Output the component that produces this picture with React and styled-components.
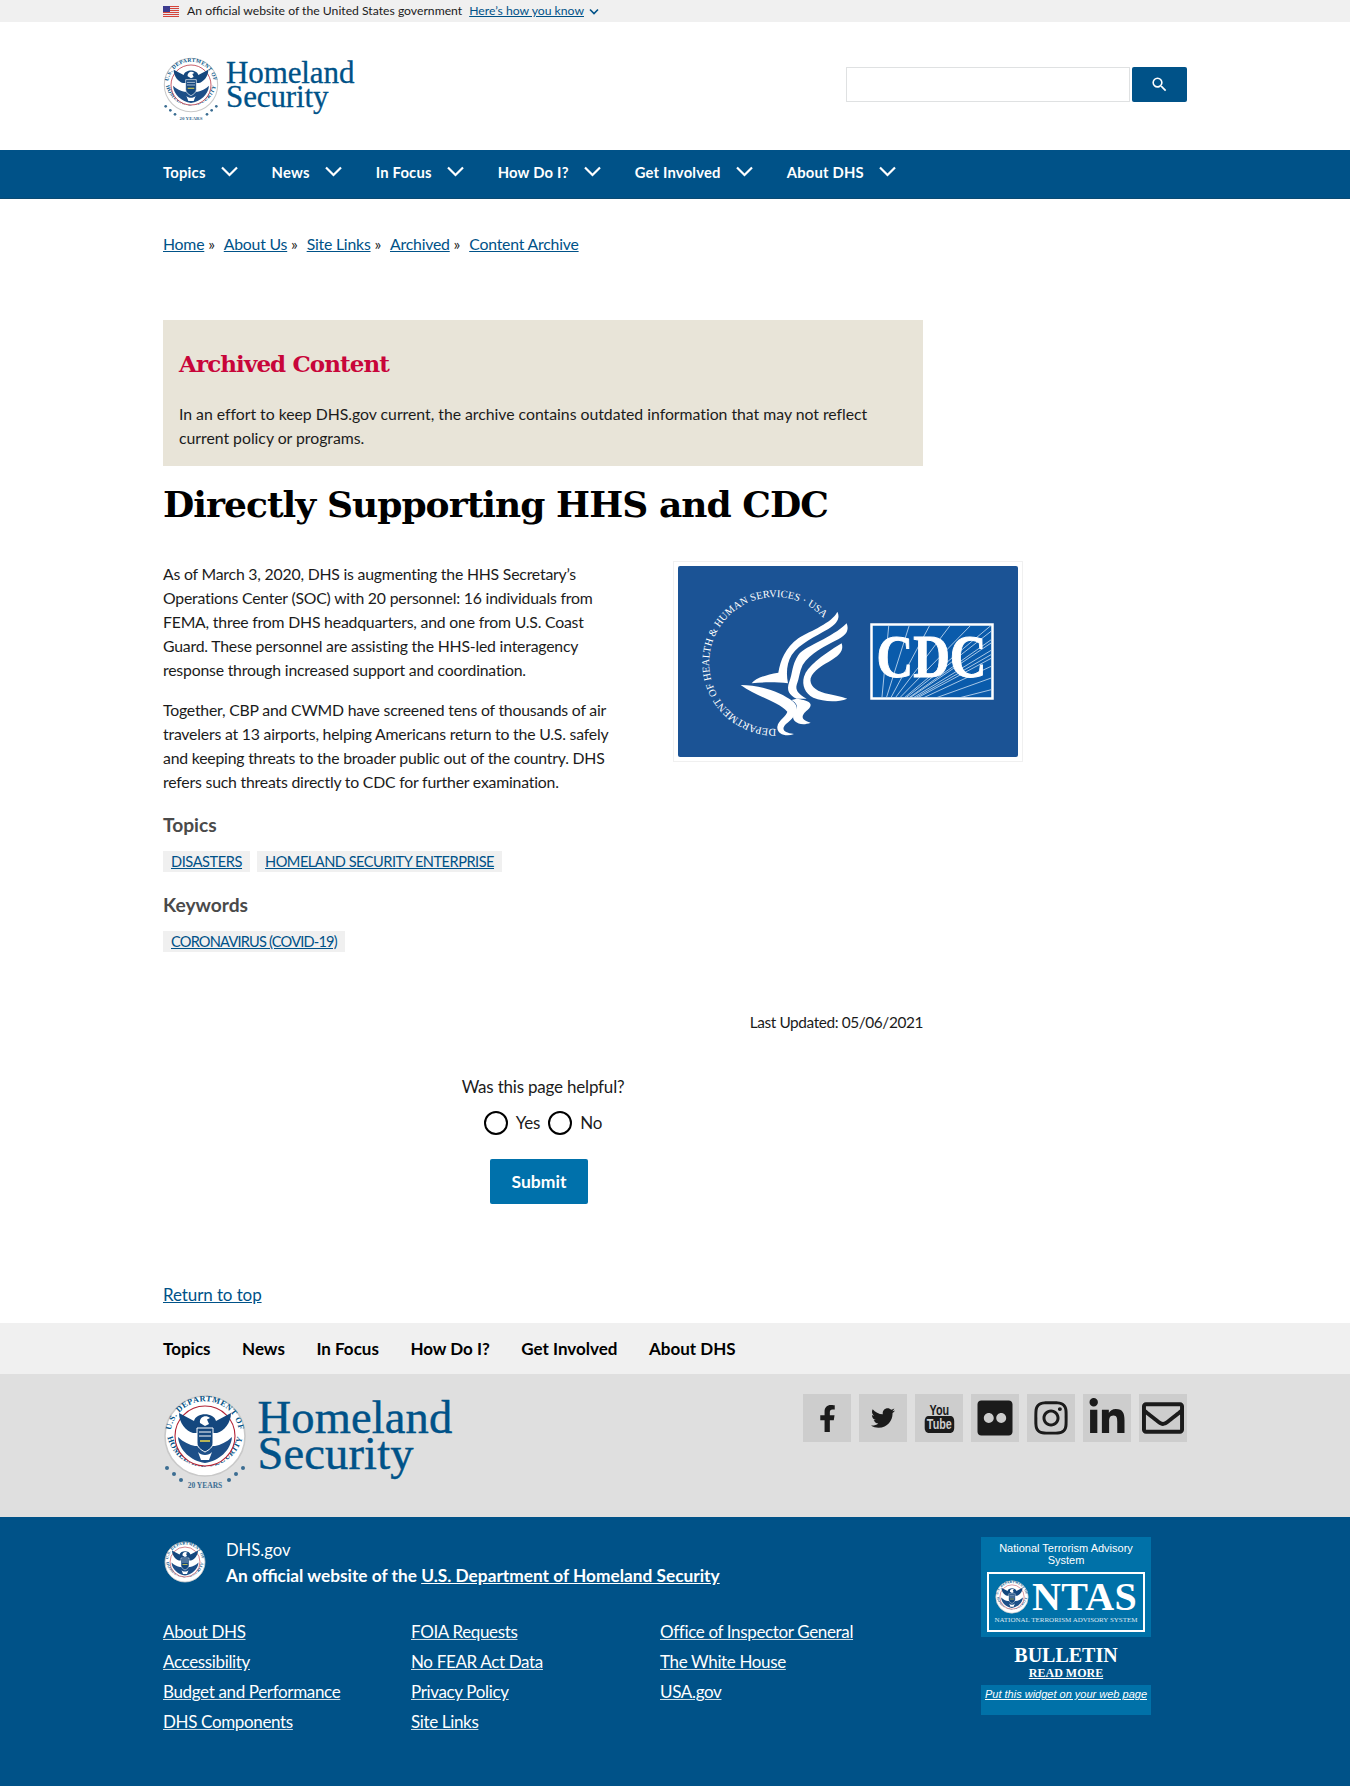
import React from "react";
import styled, { createGlobalStyle } from "styled-components";
import { FaFacebookF, FaTwitter, FaFlickr, FaInstagram, FaLinkedinIn, FaRegEnvelope } from "react-icons/fa";
import { MdSearch } from "react-icons/md";

const sans = `"Lato", "Liberation Sans", sans-serif`;
const serif = `"DejaVu Serif", "Liberation Serif", serif`;
const blue = "#005288";

const Global = createGlobalStyle`
  html, body { margin: 0; padding: 0; background: #fff; }
  body { font-family: ${sans}; color: #1b1b1b; }
  a { color: ${blue}; }
  * { box-sizing: border-box; }
`;

const Wrap = styled.div`
  width: 1024px;
  margin: 0 auto;
`;

const Banner = styled.div`
  height: 22px;
  background: #f0f0f0;
  font-size: 12.2px;
  line-height: 22px;
`;
const BannerRow = styled(Wrap)`
  display: flex;
  align-items: center;
`;
const BannerText = styled.span`
  margin-left: 8px;
`;
const BannerLink = styled.a`
  margin-left: 7px;
  text-decoration: underline;
`;
const BannerChevron = styled.svg`
  margin-left: 5px;
`;

const Flag = () => (
  <svg width="16" height="11" viewBox="0 0 16 11">
    <rect width="16" height="11" fill="#e8e8ee" />
    {[0, 2, 4, 6, 8, 10].map((y) => <rect key={y} y={y} width="16" height="1" fill="#d6453a" />)}
    <rect width="7" height="6" fill="#3c3b8e" />
  </svg>
);

const Header = styled.header`
  height: 128px;
`;
const HeaderRow = styled(Wrap)`
  height: 100%;
  display: flex;
  justify-content: space-between;
  padding-top: 35px;
`;
const Search = styled.div`
  display: flex;
  gap: 2px;
  padding-top: 10px;
`;
const SearchInput = styled.input`
  width: 284px;
  height: 35px;
  border: 1px solid #dfe1e2;
  background: #fff;
`;
const SearchBtn = styled.button`
  width: 55px;
  height: 35px;
  border: 0;
  padding: 0;
  border-radius: 2px;
  background: ${blue};
  color: #fff;
  display: flex;
  align-items: center;
  justify-content: center;
  font-size: 19px;
`;

const LogoBox = styled.div`
  display: flex;
  gap: ${(p) => p.$k * 7}px;
  align-items: flex-start;
`;
const LogoText = styled.div`
  font-family: "Liberation Serif", serif;
  color: ${blue};
  font-size: ${(p) => p.$k * 31}px;
  line-height: ${(p) => p.$k * 24.2}px;
  padding-top: ${(p) => p.$k * 4}px;
  letter-spacing: ${(p) => (p.$k > 1 ? 0.15 : -0.1)}px;
  -webkit-text-stroke: ${(p) => p.$k * 0.3}px ${blue};
`;

const Seal = ({ size, years }) => {
  const h = years ? (size * 98) / 84 : size;
  return (
    <svg width={size} height={h} viewBox={years ? "0 0 84 98" : "0 0 84 84"}>
      <defs>
        <path id="sealTop" d="M8.5 50 A34.5 34.5 0 1 1 75.5 50" />
        <path id="sealBot" d="M3.5 38 A38.7 38.7 0 0 0 80.5 38" />
      </defs>
      <circle cx="42" cy="42" r="40" fill="#fff" stroke="#c9c9c9" strokeWidth="1.6" />
      <text fontFamily="Liberation Serif, serif" fontSize="8.2" fill={blue} fontWeight="700" letterSpacing="0.55">
        <textPath href="#sealTop" startOffset="50%" textAnchor="middle">U.S. DEPARTMENT OF</textPath>
      </text>
      <text fontFamily="Liberation Serif, serif" fontSize="8.2" fill={blue} fontWeight="700" letterSpacing="0.55">
        <textPath href="#sealBot" startOffset="50%" textAnchor="middle">HOMELAND SECURITY</textPath>
      </text>
      <circle cx="42" cy="42" r="30" fill="#fff" stroke="#b22234" strokeWidth="1.1" />
      <path d="M16 19 L31 27 C33 18 51 18 53 27 L68 19 C68 29 61 37 54 39 L30 39 C23 37 16 29 16 19Z" fill="#14477e" />
      <path d="M37 29 C36 23 43 20 47 24 L44 25.5 L46 30 L42 32Z" fill="#fff" />
      <path d="M15 43 C20 48 27 51 32 52 L52 52 C57 51 64 48 69 43 C68 56 56 67 42 69 C28 67 16 56 15 43Z" fill="#1d4f88" />
      <path d="M34 34 L50 34 L50 49 C50 53 46 56 42 58 C38 56 34 53 34 49Z" fill="#14477e" stroke="#fff" strokeWidth="1" />
      <path d="M36 38 L48 38 M36 42 L48 42" stroke="#fff" strokeWidth="1" />
      <path d="M37 47 L47 47" stroke="#b8b556" strokeWidth="2" />
      <path d="M35 58 C38 62 46 62 49 58 L46 66 L38 66Z" fill="#fff" />
      {years && (
        <>
          {[[4, 74], [11, 80], [18, 86], [66, 86], [73, 80], [80, 74]].map(([x, y]) => (
            <circle key={x} cx={x} cy={y} r="2" fill="#3b6d92" />
          ))}
          <text x="42" y="94" textAnchor="middle" fontFamily="Liberation Serif, serif" fontWeight="700" fontSize="7.5" fill="#3b6d92">20 YEARS</text>
        </>
      )}
    </svg>
  );
};

const Logo = ({ k }) => (
  <LogoBox $k={k}>
    <Seal size={56 * k} years />
    <LogoText $k={k}>Homeland<br />Security</LogoText>
  </LogoBox>
);

const Nav = styled.nav`
  height: 49px;
  background: ${blue};
  border-bottom: 1px solid #0b4a72;
  padding-bottom: 5px;
`;
const NavRow = styled(Wrap)`
  display: flex;
  height: 100%;
  align-items: center;
  gap: 34px;
`;
const NavItem = styled.div`
  display: flex;
  align-items: center;
  gap: 15px;
  color: #fff;
  font-weight: 700;
  font-size: 14.8px;
  letter-spacing: 0.2px;
`;
const navItems = ["Topics", "News", "In Focus", "How Do I?", "Get Involved", "About DHS"];
const NavChevron = () => (
  <svg width="17" height="11" viewBox="0 0 17 11">
    <path d="M1 1.5 L8.5 9 L16 1.5" fill="none" stroke="#fff" strokeWidth="2.2" />
  </svg>
);

const Crumbs = styled(Wrap)`
  padding-top: 34px;
  height: 121px;
  font-size: 15.8px;
  letter-spacing: -0.2px;
  line-height: 22px;
  display: flex;
`;
const Crumb = styled.span`
  margin-right: 9px;
  white-space: nowrap;
`;

const Main = styled(Wrap)`
  position: relative;
`;
const Notice = styled.section`
  width: 760px;
  height: 146px;
  background: #e8e4d8;
  padding: 26px 16px 0;
`;
const NoticeTitle = styled.h2`
  margin: 0;
  font-family: ${serif};
  font-size: 23px;
  line-height: 36px;
  color: #c8053a;
  font-weight: 700;
  letter-spacing: -0.9px;
`;
const NoticeText = styled.p`
  margin: 20px 0 0;
  font-size: 15.8px;
  letter-spacing: -0.02px;
  line-height: 24px;
  white-space: nowrap;
`;
const Title = styled.h1`
  margin: 14px 0 0;
  font-family: ${serif};
  font-size: 36px;
  line-height: 48px;
  font-weight: 700;
  letter-spacing: -0.95px;
  color: #000;
`;
const Columns = styled.div`
  display: flex;
  margin-top: 33px;
`;
const Left = styled.div`
  width: 510px;
  padding-top: 1px;
`;
const Para = styled.p`
  margin: 0 0 16px;
  font-size: 15.8px;
  letter-spacing: -0.2px;
  line-height: 24px;
  white-space: nowrap;
`;
const Figure = styled.div`
  width: 350px;
  height: 201px;
  padding: 4px;
  border: 1px solid #f0f0f0;
  background: #fff;
`;
const SubHead = styled.h3`
  margin: ${(p) => p.$top}px 0 0;
  color: #4a4a4a;
  font-size: 19.2px;
  line-height: 24px;
  font-weight: 700;
`;
const Tags = styled.div`
  display: flex;
  gap: 7px;
  margin-top: 14px;
`;
const Tag = styled.a`
  background: #f0f0f0;
  padding: 0 8px;
  font-size: 14.6px;
  letter-spacing: ${(p) => p.$spacing}px;
  line-height: 21px;
  text-decoration: underline;
  text-transform: uppercase;
  white-space: nowrap;
`;
const Updated = styled.div`
  width: 760px;
  margin-top: 58px;
  text-align: right;
  font-size: 15.4px;
  letter-spacing: -0.4px;
  line-height: 24px;
`;
const Helpful = styled.form`
  width: 760px;
  margin-top: 41px;
  display: flex;
  flex-direction: column;
  align-items: center;
  font-size: 17px;
  letter-spacing: -0.2px;
  line-height: 24px;
`;
const RadioRow = styled.div`
  margin-top: 12px;
  display: flex;
  align-items: center;
  height: 24px;
`;
const Radio = styled.input.attrs({ type: "radio" })`
  appearance: none;
  width: 24px;
  height: 24px;
  margin: 0 8px 0 ${(p) => p.$gap}px;
  border: 2px solid #000;
  border-radius: 50%;
  background: #fff;
`;
const Submit = styled.button`
  margin: 24px 8px 0 0;
  width: 98px;
  height: 45px;
  border: 0;
  border-radius: 2px;
  background: #0071ab;
  color: #fff;
  font-family: ${sans};
  font-weight: 700;
  font-size: 17.5px;
`;
const ReturnTop = styled.a`
  display: block;
  margin-top: 79px;
  height: 40px;
  font-size: 17px;
  letter-spacing: -0.1px;
  line-height: 24px;
  text-decoration: underline;
`;

const FootNav = styled.div`
  height: 51px;
  background: #f0f0f0;
`;
const FootNavRow = styled(Wrap)`
  height: 100%;
  display: flex;
  align-items: center;
  gap: 31.5px;
  font-weight: 700;
  font-size: 17px;
  color: #000;
`;
const FootBrand = styled.div`
  height: 143px;
  background: #dfdfdf;
`;
const FootBrandRow = styled(Wrap)`
  display: flex;
  justify-content: space-between;
  padding-top: 20px;
`;
const Socials = styled.div`
  display: flex;
  gap: 8px;
`;
const Social = styled.a`
  width: 48px;
  height: 48px;
  background: #cdcdcd;
  color: #1b1b1b;
  display: flex;
  align-items: center;
  justify-content: center;
  font-size: ${(p) => p.$size}px;
`;
const YT = styled.div`
  display: flex;
  flex-direction: column;
  align-items: center;
  font-family: "Liberation Sans", sans-serif;
  font-weight: 700;
  font-size: 15px;
  line-height: 13px;
  transform: scaleX(0.72);
`;
const YTube = styled.span`
  background: #1b1b1b;
  color: #cdcdcd;
  border-radius: 5px;
  padding: 1px 3px 2px;
  font-size: 15px;
  line-height: 14px;
`;

const FootBlue = styled.footer`
  height: 269px;
  background: ${blue};
  color: #fff;
`;
const FootBlueRow = styled(Wrap)`
  display: flex;
  padding-top: 20px;
`;
const FootLeft = styled.div`
  width: 818px;
`;
const Identity = styled.div`
  display: flex;
  gap: 20px;
  align-items: flex-start;
  padding: 4px 0 0 1px;
`;
const IdentText = styled.div`
  font-size: 16.6px;
  line-height: 26px;
  margin-top: -4px;
`;
const IdentBold = styled.div`
  font-weight: 700;
  font-size: 17.3px;
  a { color: #fff; text-decoration: underline; }
`;
const LinkGrid = styled.div`
  display: grid;
  grid-template-columns: 248px 249px 1fr;
  margin-top: 28px;
`;
const LinkCol = styled.div`
  display: flex;
  flex-direction: column;
`;
const FootLink = styled.a`
  color: #fff;
  font-size: 17px;
  letter-spacing: -0.35px;
  line-height: 30px;
  text-decoration: underline;
  text-decoration-color: #cfdfe9;
`;
const Ntas = styled.aside`
  width: 170px;
  font-family: "Liberation Sans", Arial, sans-serif;
  text-align: center;
`;
const NtasTop = styled.div`
  background: #0071a8;
  height: 100px;
  padding: 5px 6px 0;
  font-size: 11px;
  line-height: 12px;
`;
const NtasBox = styled.div`
  margin-top: 6px;
  height: 60px;
  border: 2.5px solid #fff;
  display: flex;
  flex-direction: column;
  align-items: center;
  justify-content: center;
`;
const NtasLine = styled.div`
  display: flex;
  align-items: center;
  gap: 3px;
  font-family: "Liberation Serif", serif;
  font-size: 40px;
  line-height: 36px;
  font-weight: 700;
  letter-spacing: 0.3px;
`;
const NtasSub = styled.div`
  font-family: "Liberation Serif", serif;
  font-size: 7px;
  line-height: 10px;
  white-space: nowrap;
  opacity: 0.85;
`;
const Bulletin = styled.div`
  margin-top: 9px;
  font-family: "Liberation Serif", serif;
  font-weight: 700;
  font-size: 20px;
  line-height: 18px;
`;
const ReadMore = styled.div`
  font-family: "Liberation Serif", serif;
  font-weight: 700;
  font-size: 12px;
  line-height: 18px;
  text-decoration: underline;
`;
const WidgetLink = styled.a`
  display: block;
  margin-top: 3px;
  height: 30px;
  background: #0071a8;
  color: #fff;
  font-style: italic;
  font-size: 11px;
  line-height: 18px;
  text-decoration: underline;
  white-space: nowrap;
`;

const topRays = [6, 20, 34, 48, 62, 76, 90, 104, 118];
const sideRays = [6, 18, 30, 42, 54, 66];
const HhsCdc = () => (
  <svg width="340" height="191" viewBox="0 0 340 191">
    <rect width="340" height="191" rx="2" fill="#1b5395" />
    <defs>
      <path id="hhsRing" d="M98 163 A66 66 0 1 1 148 55" />
    </defs>
    <text fontFamily="Liberation Serif, serif" fontSize="10.4" fill="#fff">
      <textPath href="#hhsRing" startOffset="0" textLength="262" lengthAdjust="spacing">DEPARTMENT OF HEALTH &amp; HUMAN SERVICES · USA</textPath>
    </text>
    <g transform="scale(0.3333) translate(-84 -48)" fill="#fff">
      <path d="M562 185 C572 205 560 222 535 237 C495 260 450 280 425 315 C410 340 408 370 414 400 C380 396 340 396 305 400 C315 385 345 375 385 368 C392 330 405 295 445 265 C485 240 545 220 562 185Z" />
      <path d="M590 220 C598 240 590 255 565 268 C525 288 480 310 458 345 C448 365 448 385 440 405 C436 420 444 432 470 446 L440 446 C418 436 408 420 418 395 C428 370 425 345 445 315 C470 285 545 265 590 220Z" />
      <path d="M575 280 C582 300 570 315 545 330 C520 345 490 360 482 385 C478 405 495 422 525 430 C550 436 570 438 592 446 C560 458 520 455 490 443 C465 430 455 405 462 380 C472 350 510 320 575 280Z" />
      <path d="M272 405 C330 405 390 425 430 455 C455 478 430 505 408 522 C392 538 402 548 432 552 C408 562 380 552 382 530 C385 510 410 498 412 485 C385 455 320 440 272 405Z" />
      <path d="M440 446 C470 450 495 458 475 478 C458 492 445 508 482 518 C452 530 424 516 430 495 C434 480 455 470 425 450Z" />
    </g>
    <g transform="translate(192 57)">
      <rect x="1.5" y="1.5" width="121" height="74" fill="#0a5bab" stroke="#fff" strokeWidth="2.5" />
      <svg x="3" y="3" width="118" height="71" viewBox="3 3 118 71">
        {topRays.map((x) => <line key={x} x1="10" y1="95" x2={x * 1.5 + 10} y2="0" stroke="#cfe2f5" strokeWidth="0.8" />)}
        {sideRays.map((y) => <line key={y} x1="10" y1="95" x2="124" y2={y} stroke="#cfe2f5" strokeWidth="0.8" />)}
      </svg>
      <text x="6.5" y="54" fontFamily="Liberation Serif, serif" fontWeight="700" fontSize="62" textLength="110" lengthAdjust="spacingAndGlyphs" fill="#fff" stroke="#fff" strokeWidth="1">CDC</text>
    </g>
  </svg>
);

const footCols = [
  ["About DHS", "Accessibility", "Budget and Performance", "DHS Components"],
  ["FOIA Requests", "No FEAR Act Data", "Privacy Policy", "Site Links"],
  ["Office of Inspector General", "The White House", "USA.gov"],
];

export default function App() {
  return (
    <>
      <Global />
      <Banner>
        <BannerRow>
          <Flag />
          <BannerText>An official website of the United States government</BannerText>
          <BannerLink>Here’s how you know</BannerLink>
          <BannerChevron width="10" height="7" viewBox="0 0 10 7">
            <path d="M1 1.5 L5 5.5 L9 1.5" fill="none" stroke={blue} strokeWidth="1.6" />
          </BannerChevron>
        </BannerRow>
      </Banner>
      <Header>
        <HeaderRow>
          <Logo k={1} />
          <Search>
            <SearchInput />
            <SearchBtn><MdSearch /></SearchBtn>
          </Search>
        </HeaderRow>
      </Header>
      <Nav>
        <NavRow>
          {navItems.map((n) => (
            <NavItem key={n}>{n}<NavChevron /></NavItem>
          ))}
        </NavRow>
      </Nav>
      <Crumbs>
        {["Home", "About Us", "Site Links", "Archived"].map((c) => (
          <Crumb key={c}><a href="#">{c}</a>&nbsp;»</Crumb>
        ))}
        <Crumb><a href="#">Content Archive</a></Crumb>
      </Crumbs>
      <Main>
        <Notice>
          <NoticeTitle>Archived Content</NoticeTitle>
          <NoticeText>
            In an effort to keep DHS.gov current, the archive contains outdated information that may not reflect<br />
            current policy or programs.
          </NoticeText>
        </Notice>
        <Title>Directly Supporting HHS and CDC</Title>
        <Columns>
          <Left>
            <Para>
              As of March 3, 2020, DHS is augmenting the HHS Secretary’s<br />
              Operations Center (SOC) with 20 personnel: 16 individuals from<br />
              FEMA, three from DHS headquarters, and one from U.S. Coast<br />
              Guard. These personnel are assisting the HHS-led interagency<br />
              response through increased support and coordination.
            </Para>
            <Para>
              Together, CBP and CWMD have screened tens of thousands of air<br />
              travelers at 13 airports, helping Americans return to the U.S. safely<br />
              and keeping threats to the broader public out of the country. DHS<br />
              refers such threats directly to CDC for further examination.
            </Para>
            <SubHead $top={19}>Topics</SubHead>
            <Tags>
              <Tag $spacing={-0.42}>Disasters</Tag>
              <Tag $spacing={-0.5}>Homeland Security Enterprise</Tag>
            </Tags>
            <SubHead $top={21}>Keywords</SubHead>
            <Tags>
              <Tag $spacing={-0.8}>Coronavirus (COVID-19)</Tag>
            </Tags>
          </Left>
          <Figure><HhsCdc /></Figure>
        </Columns>
        <Updated>Last Updated: 05/06/2021</Updated>
        <Helpful>
          Was this page helpful?
          <RadioRow>
            <Radio $gap={0} name="h" />Yes
            <Radio $gap={8} name="h" />No
          </RadioRow>
          <Submit type="button">Submit</Submit>
        </Helpful>
        <ReturnTop>Return to top</ReturnTop>
      </Main>
      <FootNav>
        <FootNavRow>
          {navItems.map((n) => <span key={n}>{n}</span>)}
        </FootNavRow>
      </FootNav>
      <FootBrand>
        <FootBrandRow>
          <Logo k={1.5} />
          <Socials>
            <Social $size={27}><FaFacebookF /></Social>
            <Social $size={24}><FaTwitter /></Social>
            <Social><YT>You<YTube>Tube</YTube></YT></Social>
            <Social $size={40}><FaFlickr /></Social>
            <Social $size={38}><FaInstagram /></Social>
            <Social $size={40}><FaLinkedinIn /></Social>
            <Social $size={42}><FaRegEnvelope /></Social>
          </Socials>
        </FootBrandRow>
      </FootBrand>
      <FootBlue>
        <FootBlueRow>
          <FootLeft>
            <Identity>
              <Seal size={42} />
              <IdentText>
                DHS.gov
                <IdentBold>An official website of the <a href="#">U.S. Department of Homeland Security</a></IdentBold>
              </IdentText>
            </Identity>
            <LinkGrid>
              {footCols.map((col, i) => (
                <LinkCol key={i}>
                  {col.map((l) => <FootLink key={l}>{l}</FootLink>)}
                </LinkCol>
              ))}
            </LinkGrid>
          </FootLeft>
          <Ntas>
            <NtasTop>
              National Terrorism Advisory System
              <NtasBox>
                <NtasLine><Seal size={34} />NTAS</NtasLine>
                <NtasSub>NATIONAL TERRORISM ADVISORY SYSTEM</NtasSub>
              </NtasBox>
            </NtasTop>
            <Bulletin>BULLETIN</Bulletin>
            <ReadMore>READ MORE</ReadMore>
            <WidgetLink>Put this widget on your web page</WidgetLink>
          </Ntas>
        </FootBlueRow>
      </FootBlue>
    </>
  );
}
